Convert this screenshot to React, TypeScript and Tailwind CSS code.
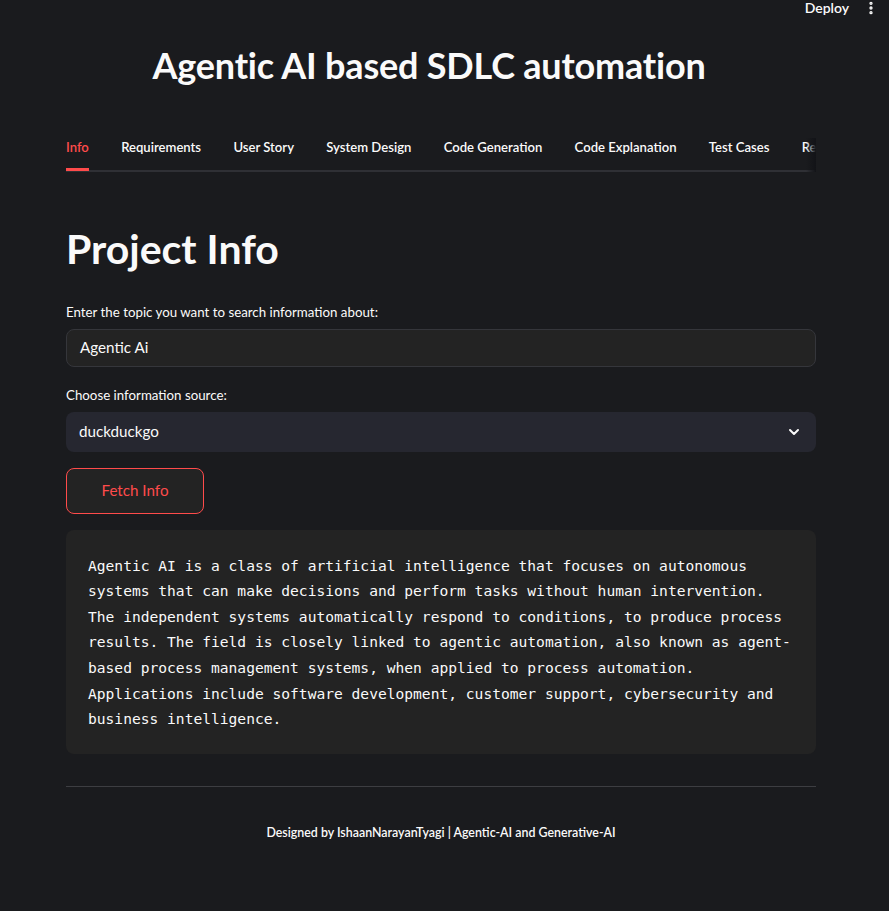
import { ChevronDown, EllipsisVertical } from "lucide-react";

const tabs = [
  "Info",
  "Requirements",
  "User Story",
  "System Design",
  "Code Generation",
  "Code Explanation",
  "Test Cases",
  "Review",
];

const summary =
  "Agentic AI is a class of artificial intelligence that focuses on autonomous systems that can make decisions and perform tasks without human intervention. The independent systems automatically respond to conditions, to produce process results. The field is closely linked to agentic automation, also known as agent-based process management systems, when applied to process automation. Applications include software development, customer support, cybersecurity and business intelligence.";

export default function App() {
  return (
    <div
      className="min-h-[911px] w-full bg-[#1a1b1e] text-[#fafafa]"
      style={{ fontFamily: "Lato, 'Noto Sans', sans-serif" }}
    >
      {/* top bar */}
      <div className="flex h-[15px] items-center justify-end gap-[14px] pr-[10px]">
        <span className="text-[14px] font-semibold leading-none">Deploy</span>
        <EllipsisVertical size={16} strokeWidth={3} className="text-[#fafafa]" />
      </div>

      <div className="ml-[66px] w-[750px]">
        <h1 className="mt-[30px] pr-[24px] text-center text-[36px] font-bold leading-[40px] tracking-[-0.2px]">
          Agentic AI based SDLC automation
        </h1>

        {/* tabs */}
        <div className="relative mt-[53px] overflow-hidden">
          <div className="flex gap-[32.3px] whitespace-nowrap pb-[12px] text-[13.1px] font-semibold">
            {tabs.map((t, i) => (
              <span key={t} className={i === 0 ? "relative text-[#ff4b4b]" : "text-[#fafafa]"}>
                {t}
                {i === 0 && (
                  <span className="absolute -bottom-[13px] left-0 h-[3px] w-full bg-[#ff4b4b]" />
                )}
              </span>
            ))}
          </div>
          <div className="h-[2px] bg-[#2f3035]" />
          <div className="pointer-events-none absolute right-0 top-0 h-[40px] w-[10px] bg-gradient-to-r from-transparent to-[#121317]" />
        </div>

        <h2 className="mt-[51px] text-[41px] font-bold leading-[52px]">Project Info</h2>

        <label className="mt-[27px] block text-[13.3px] leading-[20px]">
          Enter the topic you want to search information about:
        </label>
        <div className="mt-[7px] flex h-[38px] items-center rounded-[8px] border border-[#35363b] bg-[#232323] px-[13px] text-[15.2px]">
          Agentic Ai
        </div>

        <label className="mt-[18px] block text-[13.3px] leading-[20px]">Choose information source:</label>
        <div className="mt-[7px] flex h-[40px] items-center justify-between rounded-[8px] bg-[#262730] pl-[13px] pr-[14px] text-[15.2px]">
          <span>duckduckgo</span>
          <ChevronDown size={16} strokeWidth={3} />
        </div>

        <button className="mt-[16px] flex h-[46px] w-[138px] items-center justify-center rounded-[8px] border border-[#ff4b4b] bg-[#232323] text-[15.2px] text-[#ff4b4b]">
          Fetch Info
        </button>

        <div className="mt-[16px] rounded-[8px] bg-[#232323] px-[22px] pb-[22px] pt-[23px]">
          <p
            className="whitespace-pre-wrap text-[14.6px] leading-[25.6px] text-[#fafafa]"
            style={{ fontFamily: "'DejaVu Sans Mono', 'Liberation Mono', monospace" }}
          >
            {summary}
          </p>
        </div>

        <div className="mt-[32px] h-px bg-[#3d3e42]" />

        <p className="mt-[37px] text-center text-[12.4px] font-semibold">
          Designed by IshaanNarayanTyagi | Agentic-AI and Generative-AI
        </p>
      </div>
    </div>
  );
}
